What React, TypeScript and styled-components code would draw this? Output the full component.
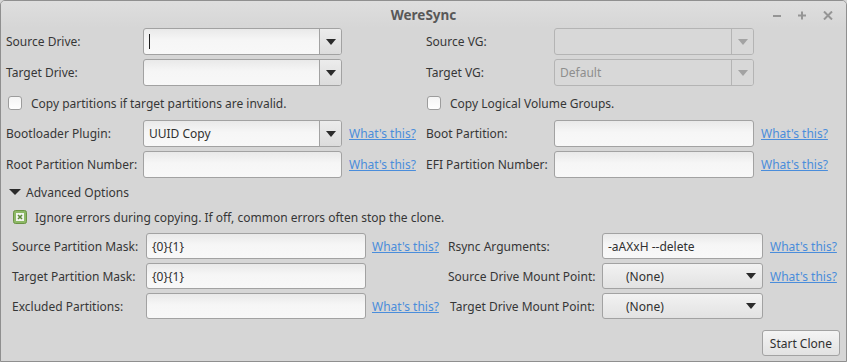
import styled, { createGlobalStyle } from "styled-components";

const GlobalStyle = createGlobalStyle`
  html, body {
    margin: 0;
    padding: 0;
    background: #d6d6d6;
  }
  body {
    font-family: "Noto Sans", "DejaVu Sans", sans-serif;
    font-size: 12px;
    color: #363636;
  }
`;

const Arrow = ({ disabled }: { disabled?: boolean }) => (
	<svg width="10" height="6" viewBox="0 0 10 6">
		<path d="M0 0 L10 0 L5 6 Z" fill={disabled ? "#a3a3a3" : "#2b2b2b"} />
	</svg>
);

const CheckMark = ({ checked }: { checked?: boolean }) =>
	checked ? (
		<svg width="14" height="14" viewBox="0 0 14 14">
			<rect x="0.5" y="0.5" width="13" height="13" rx="2" fill="#8db866" stroke="#6b9344" />
			<rect x="3" y="3" width="8" height="8" fill="#f1f4ee" />
			<path d="M5 5 L9 9 M9 5 L5 9" stroke="#5f8a3a" strokeWidth="1.6" />
		</svg>
	) : (
		<svg width="14" height="14" viewBox="0 0 14 14">
			<defs>
				<linearGradient id="cbg" x1="0" y1="0" x2="0" y2="1">
					<stop offset="0" stopColor="#f4f4f4" />
					<stop offset="1" stopColor="#ffffff" />
				</linearGradient>
			</defs>
			<rect x="0.5" y="0.5" width="13" height="13" rx="2.5" fill="url(#cbg)" stroke="#9c9c9c" />
		</svg>
	);

const Window = styled.div`
	width: 847px;
	height: 362px;
	box-sizing: border-box;
	border: 1px solid #8f8f8f;
	border-radius: 5px 5px 0 0;
	background: #d6d6d6;
	display: flex;
	flex-direction: column;
	overflow: hidden;
`;

const TitleBar = styled.div`
	height: 27px;
	display: grid;
	grid-template-columns: 1fr auto 1fr;
	align-items: center;
	background: linear-gradient(#dedede, #d6d6d6);
`;

const Title = styled.div`
	grid-column: 2;
	font-weight: bold;
	font-size: 13.5px;
	color: #585858;
`;

const WinButtons = styled.div`
	justify-self: end;
	display: flex;
	align-items: center;
	gap: 16px;
	padding-right: 13px;
	padding-top: 1px;
`;

const Body = styled.div`
	flex: 1;
	display: flex;
	flex-direction: column;
	padding: 0 5px 0 5px;
`;

const TopGrid = styled.div`
	display: grid;
	grid-template-columns: 137px 199px 83px 129px 200px auto;
	grid-template-rows: 27px 27px 26px 27px 27px;
	row-gap: 4px;
	align-items: center;
`;

const AdvGrid = styled.div`
	display: grid;
	grid-template-columns: 134px 220px 82px 154px 161px auto;
	grid-auto-rows: 26px;
	row-gap: 4px;
	align-items: center;
	margin-top: 5px;
	padding-left: 6px;
`;

const Label = styled.div<{ $shift?: number }>`
	white-space: nowrap;
	padding-left: ${(p) => p.$shift ?? 0}px;
`;

const Link = styled.a<{ $pad?: number }>`
	color: #4a8ddb;
	text-decoration: underline;
	padding-left: ${(p) => p.$pad ?? 7}px;
	white-space: nowrap;
	cursor: pointer;
`;

const CheckRow = styled.label<{ $span: string; $indent: number }>`
	grid-column: ${(p) => p.$span};
	display: flex;
	align-items: center;
	gap: 9px;
	padding-left: ${(p) => p.$indent}px;
	white-space: nowrap;
	svg {
		flex-shrink: 0;
	}
`;

const IgnoreRow = styled(CheckRow)`
	height: 22px;
	margin-top: 4px;
	gap: 8px;
`;

const Field = styled.div<{ $disabled?: boolean }>`
	height: 100%;
	box-sizing: border-box;
	display: flex;
	border: 1px solid ${(p) => (p.$disabled ? "#b4b4b4" : "#a2a2a2")};
	border-radius: 3px;
	overflow: hidden;
	background: ${(p) =>
		p.$disabled ? "#d8d8d8" : "linear-gradient(#e9e9e9, #f6f6f6 45%, #f8f8f8)"};
`;

const FieldText = styled.div<{ $disabled?: boolean }>`
	flex: 1;
	display: flex;
	align-items: center;
	padding-left: 5px;
	color: ${(p) => (p.$disabled ? "#8e8e8e" : "#303030")};
	white-space: nowrap;
`;

const Caret = styled.span`
	display: inline-block;
	width: 1px;
	height: 15px;
	background: #202020;
`;

const DropButton = styled.div<{ $disabled?: boolean }>`
	width: 21px;
	display: flex;
	align-items: center;
	justify-content: center;
	border-left: 1px solid ${(p) => (p.$disabled ? "#b4b4b4" : "#a2a2a2")};
	background: ${(p) => (p.$disabled ? "#d8d8d8" : "linear-gradient(#ececec, #dcdcdc)")};
`;

const ButtonCombo = styled.div`
	height: 100%;
	box-sizing: border-box;
	display: flex;
	align-items: center;
	justify-content: space-between;
	padding: 0 6px 0 23px;
	border: 1px solid #a2a2a2;
	border-radius: 3px;
	background: linear-gradient(#f2f2f2, #e2e2e2);
	color: #303030;
`;

const Expander = styled.div`
	display: flex;
	align-items: center;
	gap: 5px;
	height: 20px;
	margin-top: 4px;
	padding-left: 3px;
`;

const Footer = styled.div`
	display: flex;
	justify-content: flex-end;
	margin-top: 11px;
`;

const Button = styled.button`
	height: 26px;
	box-sizing: border-box;
	padding: 0 7px;
	border: 1px solid #a2a2a2;
	border-radius: 3px;
	background: linear-gradient(#f4f4f4, #e2e2e2);
	font-family: inherit;
	font-size: 12px;
	color: #303030;
	margin-right: 1px;
`;

const EntryCombo = ({
	value,
	caret,
	disabled,
}: {
	value?: string;
	caret?: boolean;
	disabled?: boolean;
}) => (
	<Field $disabled={disabled}>
		<FieldText $disabled={disabled}>
			{caret ? <Caret /> : value}
		</FieldText>
		<DropButton $disabled={disabled}>
			<Arrow disabled={disabled} />
		</DropButton>
	</Field>
);

const Entry = ({ value }: { value?: string }) => (
	<Field>
		<FieldText>{value}</FieldText>
	</Field>
);

const Combo = ({ value }: { value: string }) => (
	<ButtonCombo>
		<span>{value}</span>
		<Arrow />
	</ButtonCombo>
);

const Empty = () => <span />;

export default function App() {
	return (
		<>
			<GlobalStyle />
			<Window>
				<TitleBar>
					<Title>WereSync</Title>
					<WinButtons>
						<svg width="9" height="9" viewBox="0 0 9 9">
							<path d="M0 5 H8" stroke="#959595" strokeWidth="2" />
						</svg>
						<svg width="9" height="9" viewBox="0 0 9 9">
							<path d="M0 4.5 H8 M4 0.5 V8.5" stroke="#959595" strokeWidth="2" />
						</svg>
						<svg width="10" height="9" viewBox="0 0 10 9">
							<path d="M1 0.5 L9 8.5 M9 0.5 L1 8.5" stroke="#959595" strokeWidth="2" />
						</svg>
					</WinButtons>
				</TitleBar>
				<Body>
					<TopGrid>
						<Label>Source Drive:</Label>
						<EntryCombo caret />
						<Empty />
						<Label $shift={1}>Source VG:</Label>
						<EntryCombo disabled />
						<Empty />

						<Label>Target Drive:</Label>
						<EntryCombo />
						<Empty />
						<Label $shift={1}>Target VG:</Label>
						<EntryCombo disabled value="Default" />
						<Empty />

						<CheckRow $span="1 / 4" $indent={2}>
							<CheckMark />
							Copy partitions if target partitions are invalid.
						</CheckRow>
						<CheckRow $span="4 / 7" $indent={2}>
							<CheckMark />
							Copy Logical Volume Groups.
						</CheckRow>

						<Label>Bootloader Plugin:</Label>
						<EntryCombo value="UUID Copy" />
						<Link>What's this?</Link>
						<Label $shift={1}>Boot Partition:</Label>
						<Entry />
						<Link>What's this?</Link>

						<Label>Root Partition Number:</Label>
						<Entry />
						<Link>What's this?</Link>
						<Label $shift={1}>EFI Partition Number:</Label>
						<Entry />
						<Link>What's this?</Link>
					</TopGrid>

					<Expander>
						<svg width="12" height="6" viewBox="0 0 12 6">
							<path d="M0 0 H12 L6 6 Z" fill="#2b2b2b" />
						</svg>
						Advanced Options
					</Expander>
					<IgnoreRow $span="auto" $indent={7}>
						<CheckMark checked />
						Ignore errors during copying. If off, common errors often stop the clone.
					</IgnoreRow>

					<AdvGrid>
						<Label>Source Partition Mask:</Label>
						<Entry value="{0}{1}" />
						<Link $pad={6}>What's this?</Link>
						<Label>Rsync Arguments:</Label>
						<Entry value="-aAXxH --delete" />
						<Link>What's this?</Link>

						<Label>Target Partition Mask:</Label>
						<Entry value="{0}{1}" />
						<Empty />
						<Label>Source Drive Mount Point:</Label>
						<Combo value="(None)" />
						<Link>What's this?</Link>

						<Label>Excluded Partitions:</Label>
						<Entry />
						<Link $pad={6}>What's this?</Link>
						<Label $shift={2}>Target Drive Mount Point:</Label>
						<Combo value="(None)" />
						<Empty />
					</AdvGrid>

					<Footer>
						<Button>Start Clone</Button>
					</Footer>
				</Body>
			</Window>
		</>
	);
}
